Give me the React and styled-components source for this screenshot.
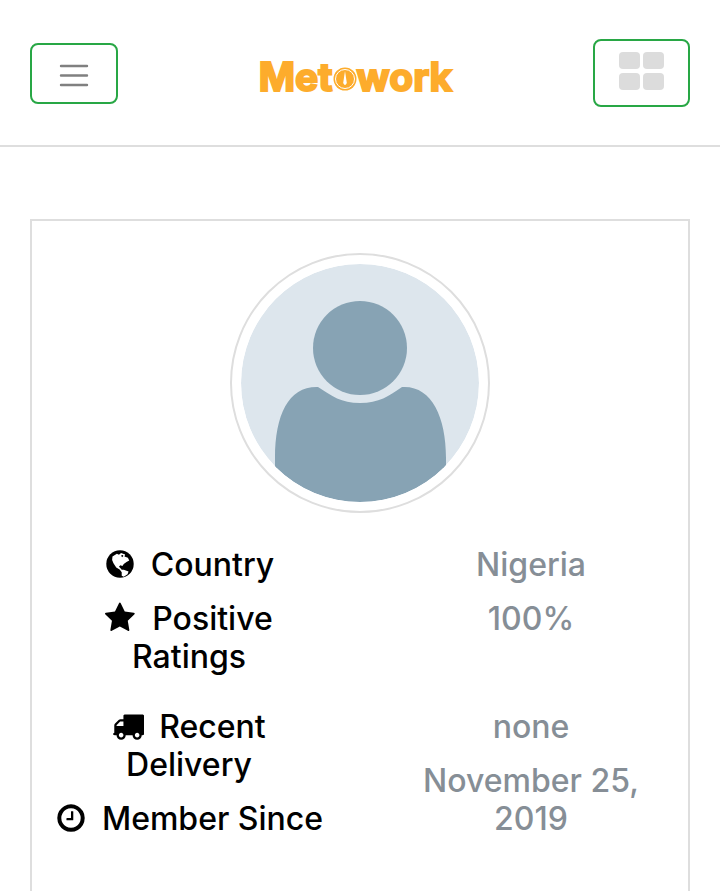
import React from "react";
import styled, { createGlobalStyle } from "styled-components";

const GlobalStyle = createGlobalStyle`
  *, *::before, *::after { box-sizing: border-box; }
  body {
    margin: 0;
    background: #fff;
    color: #000;
    font-family: Inter, "Liberation Sans", sans-serif;
  }
`;

const Header = styled.header`
  display: flex;
  align-items: center;
  justify-content: space-between;
  padding: 39px 30px 38px;
  border-bottom: 2px solid #dedede;
`;

const OutlineButton = styled.button`
  display: flex;
  justify-content: center;
  padding: ${(p) => p.$padding};
  background: #fff;
  border: 2px solid #28a745;
  border-radius: 8px;
  cursor: pointer;
`;

const Brand = styled.a`
  display: flex;
  align-items: baseline;
  padding-top: 8px;
  color: #fdac2c;
  font: 700 39px/40px Inter, sans-serif;
  -webkit-text-stroke: 2px #fdac2c;
  paint-order: stroke fill;
  text-decoration: none;
`;

const Dial = styled.svg`
  flex: none;
`;

const Main = styled.main`
  padding: 72px 30px;
`;

const Card = styled.section`
  padding: 32px 16px 60px;
  border: 2px solid #dedede;
`;

const Avatar = styled.svg`
  display: block;
  width: 260px;
  height: 260px;
  margin: 0 auto 33px;
  padding: 9px;
  border: 2px solid #dedede;
  border-radius: 50%;
`;

const Facts = styled.div`
  display: grid;
  grid-template-columns: 1fr 1fr;
  gap: 60px;
  font-size: 32px;
  font-weight: 500;
  line-height: 38px;
  text-align: center;
`;

const Column = styled.ul`
  margin: 0;
  padding: 0;
  list-style: none;
  color: ${(p) => p.$color};
`;

const Entry = styled.li`
  margin-bottom: ${(p) => p.$after || 16}px;
`;

const Glyph = styled.svg`
  width: 32px;
  height: 32px;
  margin-right: 15px;
  vertical-align: -4px;
  fill: currentColor;
`;

const icons = {
  globe: (
    <>
      <circle cx="896" cy="896" r="768" />
      <path
        fill="#fff"
        transform="translate(-3616 -448) scale(19.2)"
        d="M213 48L226 40L232 43L238 38L250 42L248 48L258 52L262 60L254 64L246 70L242 76L236 74L232 78L238 84L244 86L250 88L260 92L257 100L246 107L240 104L240 94L234 86L224 80L216 68L212 58Z"
      />
      <path
        transform="translate(-3616 -448) scale(19.2)"
        d="M238 45l5-1 2 3-4 3zM237 83l6-2 3 5-6 1z"
      />
    </>
  ),
  star: (
    <path d="M1664 647q0 22-26 48l-363 354 86 500q1 7 1 20 0 21-10.500 35.500t-30.500 14.500q-19 0-40-12l-449-236-449 236q-22 12-40 12-21 0-31.500-14.500t-10.500-35.500q0-6 2-20l86-500-364-354q-25-27-25-48 0-37 56-46l502-73 225-455q19-41 49-41t49 41l225 455 502 73q56 9 56 46z" />
  ),
  truck: (
    <path d="M640 1408q0-52-38-90t-90-38-90 38-38 90 38 90 90 38 90-38 38-90zm-384-512h384v-256h-158q-13 0-22 9l-195 195q-9 9-9 22v30zm1280 512q0-52-38-90t-90-38-90 38-38 90 38 90 90 38 90-38 38-90zm256-1088v1024q0 15-4 26.500t-13.500 18.500-16.500 11.500-23.500 6-22.500 2-25.500 0-22.500-.5q0 106-75 181t-181 75-181-75-75-181h-384q0 106-75 181t-181 75-181-75-75-181h-64q-3 0-22.500.5t-25.500 0-22.500-2-23.500-6-16.500-11.500-13.500-18.500-4-26.500q0-26 19-45t45-19v-320q0-8-.5-35t0-38 2.500-34.500 6.500-37 14-30.500 22.500-30l198-198q19-19 50.500-32t58.500-13h160v-192q0-26 19-45t45-19h1024q26 0 45 19t19 45z" />
  ),
  clock: (
    <path d="M1024 544v448q0 14-9 23t-23 9h-320q-14 0-23-9t-9-23v-64q0-14 9-23t23-9h224v-352q0-14 9-23t23-9h64q14 0 23 9t9 23zm416 352q0-148-73-273t-198-198-273-73-273 73-198 198-73 273 73 273 198 198 273 73 273-73 198-198 73-273zm224 0q0 209-103 385.500t-279.500 279.500-385.500 103-385.500-103-279.500-279.500-103-385.500 103-385.500 279.500-279.500 385.500-103 385.500 103 279.500 279.500 103 385.500z" />
  ),
};

const labels = [
  { icon: "globe", text: "Country" },
  { icon: "star", text: "Positive Ratings", after: 32 },
  { icon: "truck", text: "Recent Delivery" },
  { icon: "clock", text: "Member Since" },
];

const values = [
  { text: "Nigeria" },
  { text: "100%", after: 70 },
  { text: "none" },
  { text: "November 25, 2019" },
];

export default function App() {
  return (
    <>
      <GlobalStyle />
      <Header>
        <OutlineButton type="button" aria-label="Menu" $padding="12px 24px 9px">
          <svg width="36" height="36" viewBox="0 0 36 36" stroke="#808080" strokeWidth="2.4" strokeLinecap="round">
            <path d="M5 9h26M5 18.500h26M5 28h26" />
          </svg>
        </OutlineButton>
        <Brand href="#" aria-label="Metowork">
          <span>Met</span>
          <Dial width="24" height="24" viewBox="0 0 24 24" aria-hidden="true">
            <circle cx="12" cy="12" r="11.500" fill="#fdac2c" />
            <circle cx="12" cy="12" r="9.500" fill="none" stroke="#fff" strokeWidth="1" />
            <path d="M12 4l1.800 12q-1.800 4-3.600 0z" fill="#fff" />
          </Dial>
          <span>work</span>
        </Brand>
        <OutlineButton type="button" aria-label="Categories" $padding="11px 24px 15px">
          <svg width="45" height="38" viewBox="0 0 45 38" fill="#dcdcdc">
            <rect width="21" height="17" rx="4" />
            <rect x="24" width="21" height="17" rx="4" />
            <rect y="21" width="21" height="17" rx="4" />
            <rect x="24" y="21" width="21" height="17" rx="4" />
          </svg>
        </OutlineButton>
      </Header>
      <Main>
        <Card>
          <Avatar viewBox="0 0 238 238" role="img" aria-label="Profile picture">
            <defs>
              <clipPath id="face">
                <circle cx="119" cy="119" r="119" />
              </clipPath>
            </defs>
            <g clipPath="url(#face)">
              <rect width="238" height="238" fill="#dde6ed" />
              <circle cx="119" cy="84" r="47" fill="#87a3b4" />
              <path
                fill="#87a3b4"
                d="M34 238V194C34 150 48 122 77 123C91 132 100 139 119 139C138 139 148 132 161 123C190 121 205 152 205 194V238Z"
              />
            </g>
          </Avatar>
          <Facts>
            <Column $color="#000">
              {labels.map((l) => (
                <Entry key={l.text} $after={l.after}>
                  <Glyph viewBox="0 0 1792 1792" aria-hidden="true">{icons[l.icon]}</Glyph>
                  {l.text}
                </Entry>
              ))}
            </Column>
            <Column $color="#868e96">
              {values.map((v) => (
                <Entry key={v.text} $after={v.after}>{v.text}</Entry>
              ))}
            </Column>
          </Facts>
        </Card>
      </Main>
    </>
  );
}
